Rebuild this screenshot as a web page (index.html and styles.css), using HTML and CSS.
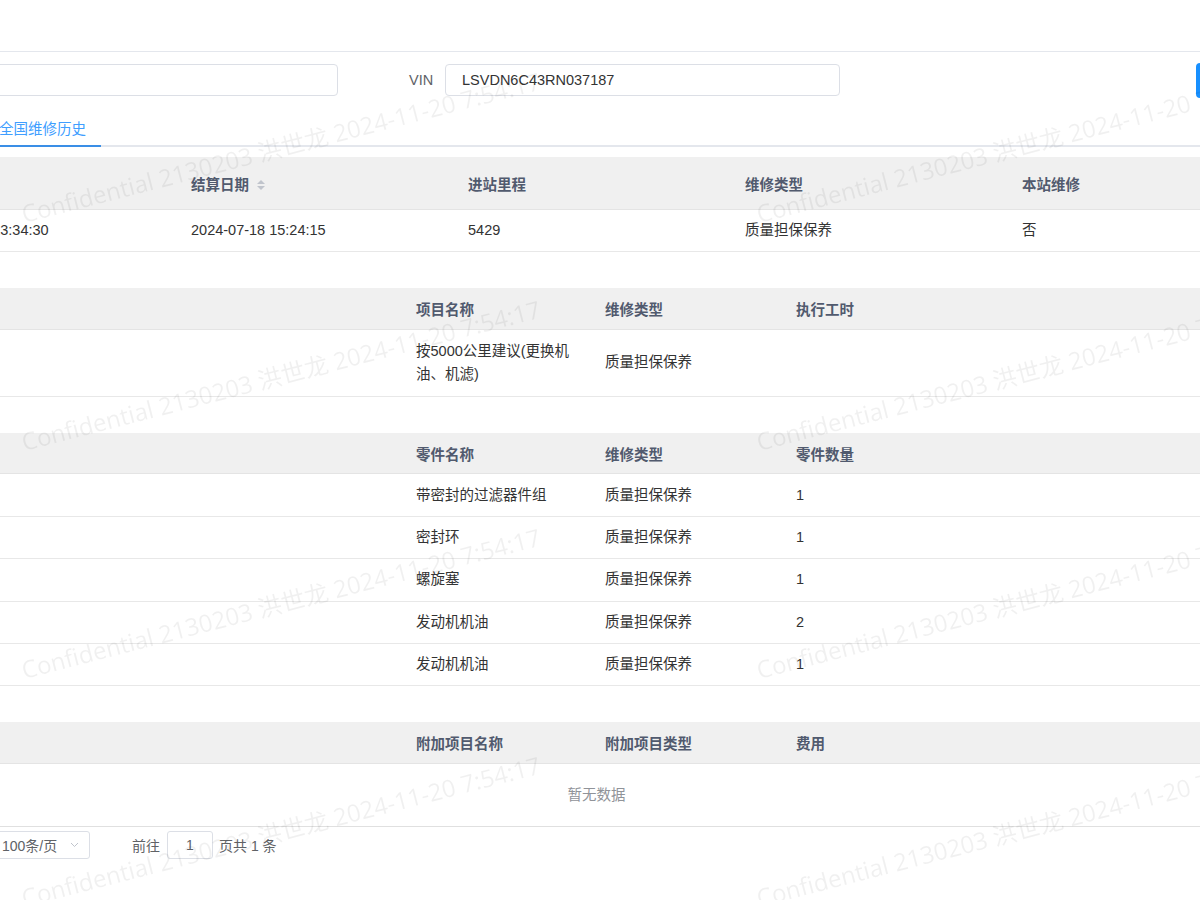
FILE: index.html
```html
<!DOCTYPE html>
<html lang="zh-CN">
<head>
<meta charset="utf-8">
<title>全国维修历史</title>
<link rel="stylesheet" href="styles.css">
</head>
<body>
<div class="topbar"></div>
<div class="content">
  <div class="filters">
    <input class="input input-first" type="text" value="">
    <label class="field-label">VIN</label>
    <input class="input input-vin" type="text" value="LSVDN6C43RN037187">
    <button class="btn-primary" type="button">查询</button>
  </div>

  <div class="tabs">
    <div class="tab is-active">全国维修历史</div>
  </div>

  <table class="grid grid-main">
    <colgroup><col class="c277"><col class="c277"><col class="c277"><col class="c277"><col class="c277"></colgroup>
    <thead>
      <tr><th></th><th>结算日期 <span class="sort"><i class="up"></i><i class="down"></i></span></th><th>进站里程</th><th>维修类型</th><th>本站维修</th></tr>
    </thead>
    <tbody>
      <tr><td>2024-07-18 13:34:30</td><td>2024-07-18 15:24:15</td><td>5429</td><td>质量担保保养</td><td>否</td></tr>
    </tbody>
  </table>

  <table class="grid grid-sub">
    <colgroup><col class="c502"><col class="c189"><col class="c191"><col class="c503"></colgroup>
    <thead>
      <tr><th></th><th>项目名称</th><th>维修类型</th><th>执行工时</th></tr>
    </thead>
    <tbody>
      <tr class="tall"><td></td><td>按5000公里建议(更换机油、机滤)</td><td>质量担保保养</td><td></td></tr>
    </tbody>
  </table>

  <table class="grid grid-sub">
    <colgroup><col class="c502"><col class="c189"><col class="c191"><col class="c503"></colgroup>
    <thead>
      <tr><th></th><th>零件名称</th><th>维修类型</th><th>零件数量</th></tr>
    </thead>
    <tbody>
      <tr><td></td><td>带密封的过滤器件组</td><td>质量担保保养</td><td>1</td></tr>
      <tr><td></td><td>密封环</td><td>质量担保保养</td><td>1</td></tr>
      <tr><td></td><td>螺旋塞</td><td>质量担保保养</td><td>1</td></tr>
      <tr><td></td><td>发动机机油</td><td>质量担保保养</td><td>2</td></tr>
      <tr><td></td><td>发动机机油</td><td>质量担保保养</td><td>1</td></tr>
    </tbody>
  </table>

  <table class="grid grid-sub">
    <colgroup><col class="c502"><col class="c189"><col class="c191"><col class="c503"></colgroup>
    <thead>
      <tr><th></th><th>附加项目名称</th><th>附加项目类型</th><th>费用</th></tr>
    </thead>
    <tbody>
      <tr><td class="empty" colspan="4">暂无数据</td></tr>
    </tbody>
  </table>

  <div class="pagination">
    <div class="size-select">
      <span>100条/页</span>
      <svg class="chev" width="9" height="6" viewBox="0 0 9 6"><path d="M1 1 L4.5 4.5 L8 1" fill="none" stroke="#c0c4cc" stroke-width="1"/></svg>
    </div>
    <span class="jump-label">前往</span>
    <input class="jump-input" type="text" value="1">
    <span class="total">页共 1 条</span>
  </div>
</div>

<div class="watermark">
  <div class="wm"><span>Confidential 2130203 洪世龙 2024-11-20 7:54:17</span></div>
  <div class="wm"><span>Confidential 2130203 洪世龙 2024-11-20 7:54:17</span></div>
  <div class="wm"><span>Confidential 2130203 洪世龙 2024-11-20 7:54:17</span></div>
  <div class="wm"><span>Confidential 2130203 洪世龙 2024-11-20 7:54:17</span></div>
  <div class="wm"><span>Confidential 2130203 洪世龙 2024-11-20 7:54:17</span></div>
  <div class="wm"><span>Confidential 2130203 洪世龙 2024-11-20 7:54:17</span></div>
  <div class="wm"><span>Confidential 2130203 洪世龙 2024-11-20 7:54:17</span></div>
  <div class="wm"><span>Confidential 2130203 洪世龙 2024-11-20 7:54:17</span></div>
</div>
</body>
</html>
```

FILE: styles.css
```css
* { box-sizing: border-box; }
html, body {
  margin: 0;
  padding: 0;
  overflow: hidden;
  background: #fff;
}
body {
  width: 1200px;
  height: 900px;
  font-family: "Liberation Sans", Arial, "Noto Sans CJK SC", sans-serif;
  font-size: 14.5px;
  color: #333;
}

.topbar {
  height: 52px;
  border-bottom: 1px solid #e4e7ed;
}

.content {
  margin-left: -96px;
  width: 1400px;
}

/* filters */
.filters {
  display: flex;
  align-items: flex-start;
  padding-top: 12px;
  height: 44px;
}
.input {
  height: 32px;
  border: 1px solid #dcdfe6;
  border-radius: 4px;
  font: inherit;
  color: #333;
  outline: none;
  background: #fff;
}
.input-first { width: 434px; }
.field-label {
  width: 36px;
  margin-left: 71px;
  line-height: 32px;
  color: #606266;
}
.input-vin {
  width: 395px;
  padding-left: 16px;
}
.btn-primary {
  margin-left: 356px;
  margin-top: -1px;
  width: 80px;
  height: 35px;
  border: none;
  border-radius: 4px;
  background: #1890ff;
  color: #fff;
  font: inherit;
}

/* tabs */
.tabs {
  position: relative;
  margin-top: 11px;
  height: 40px;
  display: flex;
}
.tabs::after {
  content: "";
  position: absolute;
  left: 0; right: 0; bottom: 0;
  height: 2px;
  background: #e4e7ed;
}
.tab {
  position: relative;
  margin-left: 80px;
  padding: 4px 15px 0;
  line-height: 36px;
  height: 40px;
  font-size: 14.5px;
  color: #333;
}
.tab.is-active { color: #409eff; }
.tab.is-active::after {
  content: "";
  position: absolute;
  left: 0; right: 0; bottom: 0;
  height: 2px;
  background: #3a8ee6;
  z-index: 1;
}

/* tables */
.grid {
  width: 1385px;
  table-layout: fixed;
  border-collapse: separate;
  border-spacing: 0;
  margin-top: 36px;
}
.grid-main { margin-top: 10px; }
.c277 { width: 277px; }
.c502 { width: 502px; }
.c189 { width: 189px; }
.c191 { width: 191px; }
.c503 { width: 503px; }

.grid th {
  background: #f0f0f0;
  color: #515a6e;
  font-weight: 700;
  text-align: left;
  padding: 0 10px;
  height: 41.5px;
  border-bottom: 1px solid #e4e4e4;
  white-space: nowrap;
}
.grid-main th { height: 53px; }
.grid td {
  padding: 9px 14px 9px 10px;
  line-height: 23px;
  height: 42.4px;
  border-bottom: 1px solid #e8e8e8;
  vertical-align: middle;
  color: #333;
}
.grid tr.tall td {
  padding-top: 10px;
  padding-bottom: 10px;
}
.grid td.empty {
  text-align: center;
  color: #909399;
  height: 62px;
  padding: 0;
  line-height: 62px;
  border-bottom: 1px solid #e0e0e0;
}

.sort {
  display: inline-flex;
  flex-direction: column;
  gap: 2px;
  vertical-align: middle;
  margin-left: 4px;
  margin-top: -2px;
}
.sort i {
  display: block;
  width: 0; height: 0;
  border-left: 4px solid transparent;
  border-right: 4px solid transparent;
}
.sort .up { border-bottom: 4px solid #c0c4cc; }
.sort .down { border-top: 4px solid #c0c4cc; }

/* pagination */
.pagination {
  display: flex;
  align-items: center;
  margin-top: 4px;
  padding-left: 82px;
  font-size: 14px;
  color: #606266;
}
.size-select {
  width: 104px;
  height: 28px;
  border: 1px solid #dcdfe6;
  border-radius: 3px;
  display: flex;
  align-items: center;
  justify-content: space-between;
  padding: 0 10px 0 15px;
  color: #606266;
}
.chev { margin-top: 1px; }
.jump-label { margin-left: 42px; }
.jump-input {
  width: 46px;
  height: 28px;
  margin-left: 7px;
  border: 1px solid #dcdfe6;
  border-radius: 3px;
  text-align: center;
  font: inherit;
  color: #606266;
  outline: none;
}
.total { margin-left: 6px; }

/* watermark overlay */
.watermark {
  position: fixed;
  top: -2px;
  left: 25px;
  pointer-events: none;
  z-index: 10;
  display: grid;
  grid-template-columns: repeat(2, 735px);
  grid-auto-rows: 228px;
}
.wm { position: relative; }
.wm span {
  position: absolute;
  left: 0;
  bottom: 0;
  white-space: nowrap;
  font-family: "Open Sans", "Noto Sans CJK SC", sans-serif;
  font-size: 24px;
  line-height: 1;
  color: rgba(0, 0, 0, 0.06);
  transform: rotate(-14.5deg);
  transform-origin: 0 100%;
}
```
